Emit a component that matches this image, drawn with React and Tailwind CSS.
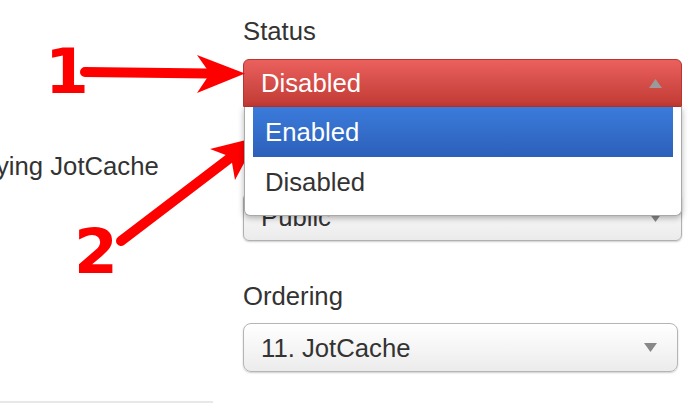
import React from "react";

// Up / down caret used inside the selects
function Caret({ up = false, className = "" }) {
  return (
    <svg width="13" height="9" viewBox="0 0 13 9" className={className}>
      {up ? <polygon points="6.5,0 13,9 0,9" /> : <polygon points="0,0 13,0 6.5,9" />}
    </svg>
  );
}

function Arrows() {
  return (
    <svg
      className="absolute inset-0 pointer-events-none"
      width="695"
      height="415"
      viewBox="0 0 695 415"
    >
      {/* arrow 1 */}
      <line x1="85" y1="72" x2="208" y2="73.5" stroke="#ff0000" strokeWidth="10" strokeLinecap="round" />
      <polygon points="197,55 245,73.5 197,93 210,73.5" fill="#ff0000" />
      {/* arrow 2 */}
      <line x1="121" y1="241" x2="230" y2="158" stroke="#ff0000" strokeWidth="10" strokeLinecap="round" />
      <polygon points="210,149 258,137 235,180 231,157" fill="#ff0000" />
    </svg>
  );
}

export default function App() {
  return (
    <div className="relative w-[695px] h-[415px] overflow-hidden bg-white text-[#333] font-['Liberation_Sans',Arial,sans-serif] text-[25.7px] leading-[30px]">
      <div className="flex">
        {/* left column */}
        <div className="w-[213px] shrink-0 overflow-hidden">
          <p className="mt-[151px] -ml-[4px] whitespace-nowrap">ying JotCache</p>
          <div className="mt-[220px] h-[2px] bg-[#e8e8e8]" />
        </div>

        {/* right column */}
        <div className="ml-[30px] w-[440px]">
          <div className="mt-[16px]">Status</div>

          {/* open status select */}
          <div className="relative mt-[13px] w-[439px]">
            <div className="h-[48px] flex items-center justify-between pl-[17px] pr-[19px] rounded-t-[6px] border border-[#b8362f] bg-gradient-to-b from-[#ea605d] to-[#c13a33] text-white">
              <span>Disabled</span>
              <Caret up className="fill-[#9a9a9a]" />
            </div>

            {/* options menu */}
            <div className="absolute z-10 top-full left-[1px] w-[438px] bg-white border border-t-0 border-[#a9a9a9] rounded-b-[6px] shadow-[0_2px_6px_rgba(0,0,0,0.3)] px-[8px] pb-[8px]">
              <div className="h-[50px] flex items-center pl-[12px] bg-gradient-to-b from-[#3b7bdb] to-[#2c60ba] text-white">
                Enabled
              </div>
              <div className="h-[50px] flex items-center pl-[12px]">Disabled</div>
            </div>
          </div>

          {/* access select, mostly covered */}
          <div className="mt-[86px] w-[439px] h-[48px] flex items-center justify-between pl-[17px] pr-[19px] rounded-[6px] border border-[#b0b0b0] bg-gradient-to-b from-white to-[#ebebeb] shadow-[0_1px_2px_rgba(0,0,0,0.2)]">
            <span>Public</span>
            <Caret className="fill-[#888]" />
          </div>

          <div className="mt-[40px]">Ordering</div>

          <div className="mt-[12px] w-[435px] h-[49px] flex items-center justify-between pl-[17px] pr-[20px] rounded-[8px] border border-[#b5b5b5] bg-gradient-to-b from-white to-[#ececec] shadow-[0_1px_2px_rgba(0,0,0,0.2)]">
            <span>11. JotCache</span>
            <Caret className="fill-[#888]" />
          </div>
        </div>
      </div>

      <Arrows />

      {/* annotation numbers */}
      <span className="absolute left-[45px] top-[40px] font-['DejaVu_Sans',sans-serif] font-bold text-[63px] leading-none text-[#ff0000]">
        1
      </span>
      <span className="absolute left-[74px] top-[220px] font-['DejaVu_Sans',sans-serif] font-bold text-[63px] leading-none text-[#ff0000]">
        2
      </span>
    </div>
  );
}
